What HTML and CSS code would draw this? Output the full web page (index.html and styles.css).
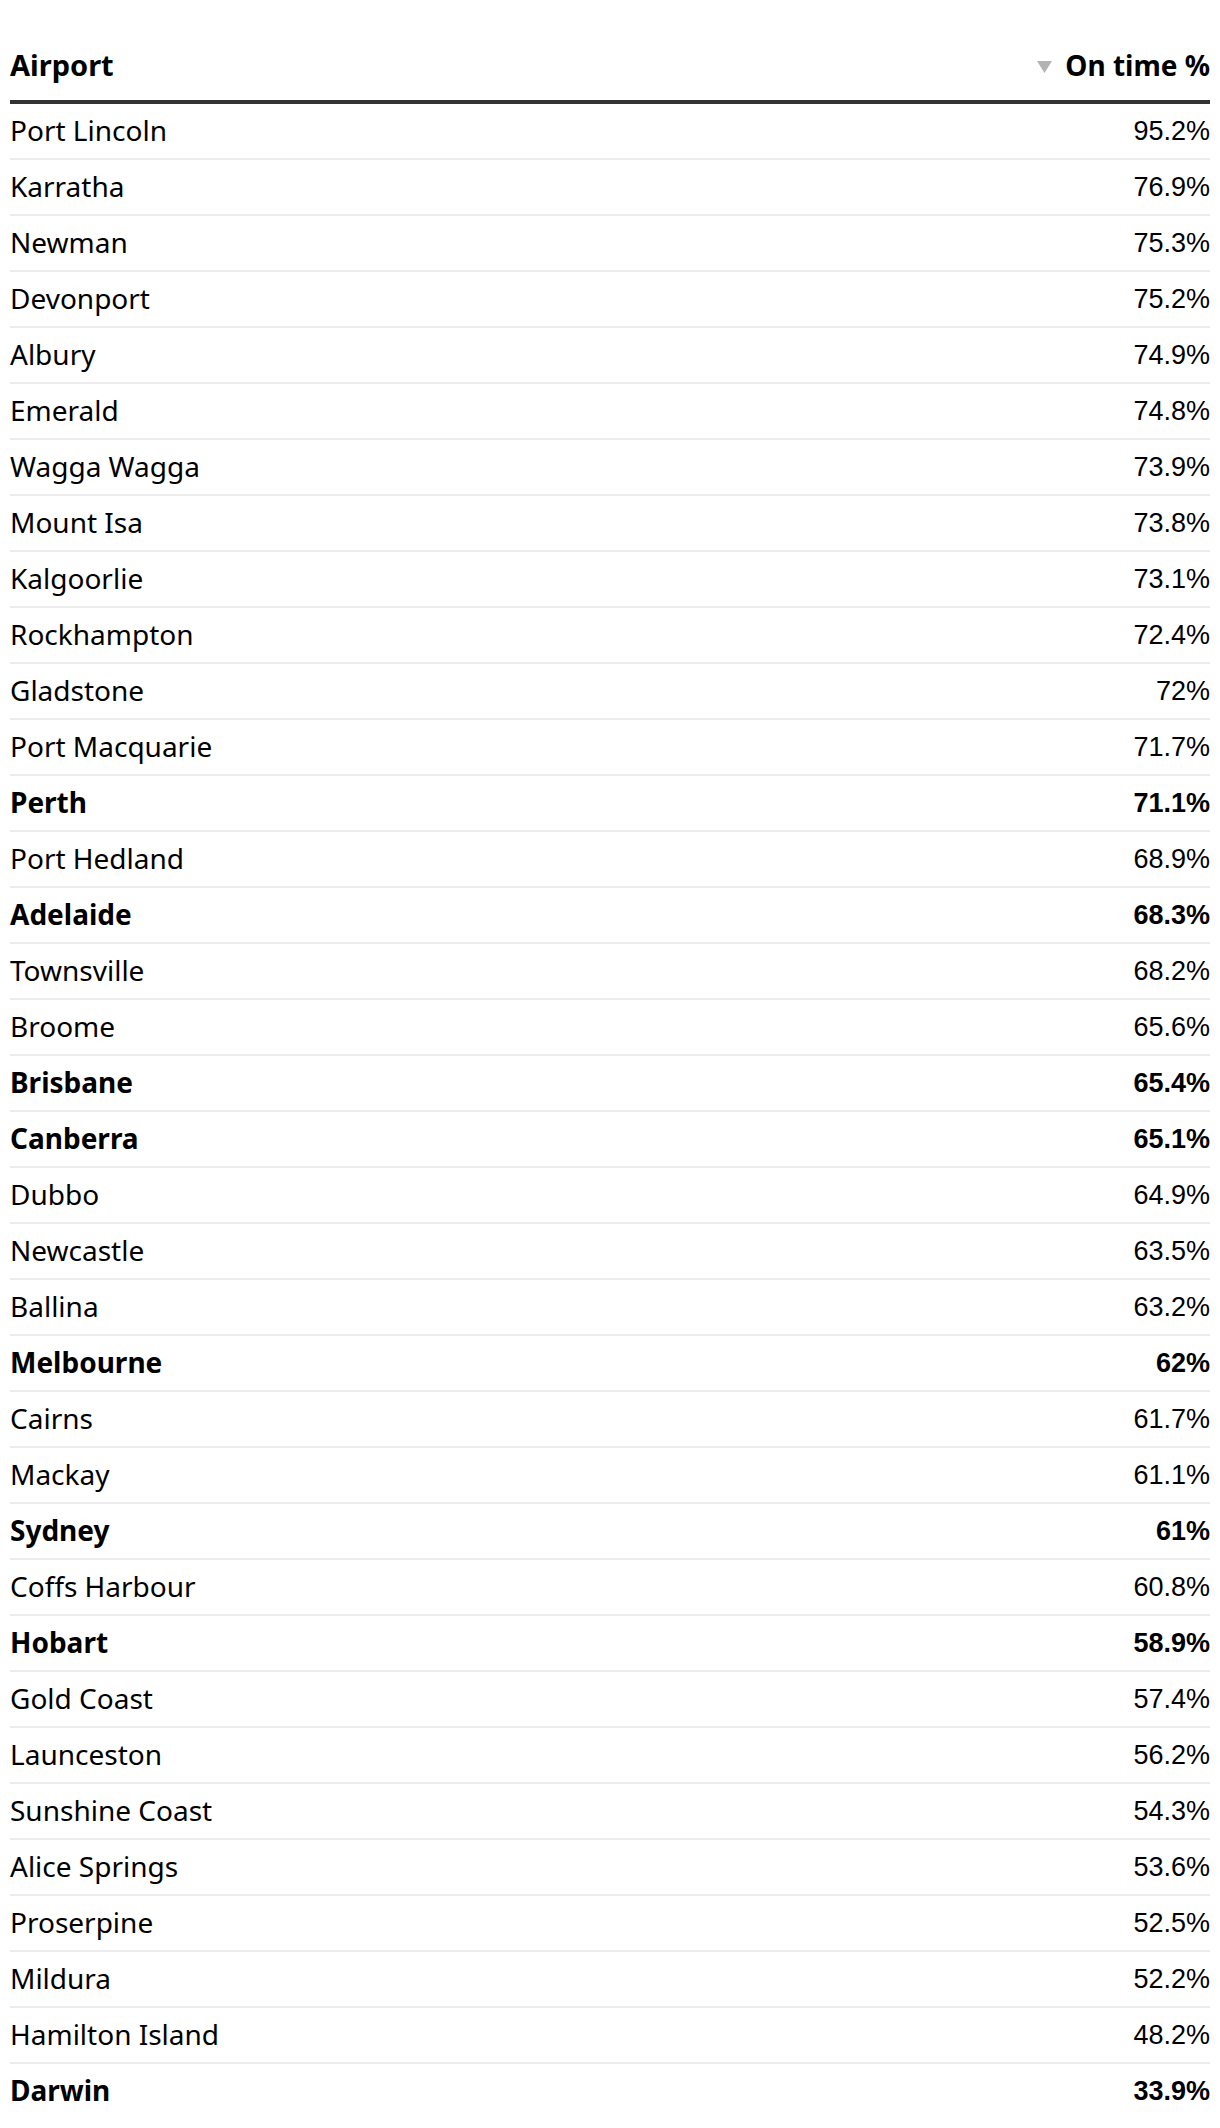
FILE: index.html
```html
<!DOCTYPE html>
<html lang="en">
<head>
<meta charset="utf-8">
<title>Airport on time performance</title>
<link rel="stylesheet" href="styles.css">
</head>
<body>
<div class="wrap">
<table class="data">
<thead>
<tr>
<th class="col-name">Airport</th>
<th class="col-val"><svg class="sort" width="15" height="12" viewBox="0 0 15 12" aria-hidden="true"><polygon points="0,0 15,0 7.5,12" fill="#b3b3b3"/></svg>On time %</th>
</tr>
</thead>
<tbody>
<tr><td class="name">Port Lincoln</td><td class="val">95.2%</td></tr>
<tr><td class="name">Karratha</td><td class="val">76.9%</td></tr>
<tr><td class="name">Newman</td><td class="val">75.3%</td></tr>
<tr><td class="name">Devonport</td><td class="val">75.2%</td></tr>
<tr><td class="name">Albury</td><td class="val">74.9%</td></tr>
<tr><td class="name">Emerald</td><td class="val">74.8%</td></tr>
<tr><td class="name">Wagga Wagga</td><td class="val">73.9%</td></tr>
<tr><td class="name">Mount Isa</td><td class="val">73.8%</td></tr>
<tr><td class="name">Kalgoorlie</td><td class="val">73.1%</td></tr>
<tr><td class="name">Rockhampton</td><td class="val">72.4%</td></tr>
<tr><td class="name">Gladstone</td><td class="val">72%</td></tr>
<tr><td class="name">Port Macquarie</td><td class="val">71.7%</td></tr>
<tr class="major"><td class="name">Perth</td><td class="val">71.1%</td></tr>
<tr><td class="name">Port Hedland</td><td class="val">68.9%</td></tr>
<tr class="major"><td class="name">Adelaide</td><td class="val">68.3%</td></tr>
<tr><td class="name">Townsville</td><td class="val">68.2%</td></tr>
<tr><td class="name">Broome</td><td class="val">65.6%</td></tr>
<tr class="major"><td class="name">Brisbane</td><td class="val">65.4%</td></tr>
<tr class="major"><td class="name">Canberra</td><td class="val">65.1%</td></tr>
<tr><td class="name">Dubbo</td><td class="val">64.9%</td></tr>
<tr><td class="name">Newcastle</td><td class="val">63.5%</td></tr>
<tr><td class="name">Ballina</td><td class="val">63.2%</td></tr>
<tr class="major"><td class="name">Melbourne</td><td class="val">62%</td></tr>
<tr><td class="name">Cairns</td><td class="val">61.7%</td></tr>
<tr><td class="name">Mackay</td><td class="val">61.1%</td></tr>
<tr class="major"><td class="name">Sydney</td><td class="val">61%</td></tr>
<tr><td class="name">Coffs Harbour</td><td class="val">60.8%</td></tr>
<tr class="major"><td class="name">Hobart</td><td class="val">58.9%</td></tr>
<tr><td class="name">Gold Coast</td><td class="val">57.4%</td></tr>
<tr><td class="name">Launceston</td><td class="val">56.2%</td></tr>
<tr><td class="name">Sunshine Coast</td><td class="val">54.3%</td></tr>
<tr><td class="name">Alice Springs</td><td class="val">53.6%</td></tr>
<tr><td class="name">Proserpine</td><td class="val">52.5%</td></tr>
<tr><td class="name">Mildura</td><td class="val">52.2%</td></tr>
<tr><td class="name">Hamilton Island</td><td class="val">48.2%</td></tr>
<tr class="major"><td class="name">Darwin</td><td class="val">33.9%</td></tr>
</tbody>
</table>
</div>
</body>
</html>
```

FILE: styles.css
```css
html, body {
  margin: 0;
  padding: 0;
  background: #ffffff;
}

body {
  font-family: "Noto Sans", "Liberation Sans", sans-serif;
  color: #000;
}

.wrap {
  padding: 0 10px;
}

.data {
  width: 100%;
  border-collapse: collapse;
  border-spacing: 0;
}

.data th {
  height: 30px;
  padding: 50px 0 20px;
  font-size: 28px;
  line-height: 30px;
  font-weight: 700;
  color: #000;
  border-bottom: 4px solid #333333;
  vertical-align: middle;
  white-space: nowrap;
}

.data .col-name {
  text-align: left;
  font-size: 29px;
}

.col-val {
  text-align: right;
}

.sort {
  display: inline-block;
  margin-right: 13px;
  vertical-align: 3px;
}

.data td {
  height: 52px;
  padding: 0 0 2px;
  font-size: 28px;
  line-height: 30px;
  vertical-align: middle;
  border-bottom: 2px solid #ececec;
}

.data tbody tr:last-child td {
  border-bottom: none;
}

.name {
  text-align: left;
}

.data .val {
  padding: 1px 0 1px;
  text-align: right;
  font-family: "Liberation Sans", Arial, sans-serif;
  font-size: 27px;
}

.major td {
  font-weight: 700;
}
```
